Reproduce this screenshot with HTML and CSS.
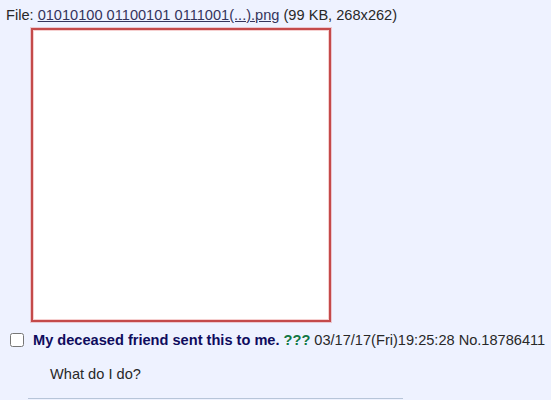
FILE: index.html
```html
<!DOCTYPE html>
<html lang="en">
<head>
  <meta charset="UTF-8" />
  <title>/x/ - Paranormal</title>
  <link rel="stylesheet" href="styles.css">
</head>
<body>
  <div class="post op">
    <div class="file-text">
      File: <a href="#">01010100 01100101 0111001(...).png</a> (99 KB, 268x262)
    </div>
    <a class="file-thumb" href="#"><div class="thumb-img"></div></a>

    <div class="post-info">
      <input type="checkbox" class="post-check" />
      <span class="subject">My deceased friend sent this to me.</span>
      <span class="name">???</span>
      <span class="date">03/17/17(Fri)19:25:28</span>
      <span class="post-num">No.18786411</span>
    </div>

    <blockquote class="post-message">What do I do?</blockquote>
  </div>
  <hr class="divider" />
</body>
</html>
```

FILE: styles.css
```css
* {
  margin: 0;
  padding: 0;
  box-sizing: border-box;
}

body {
  background: #eef2ff;
  color: #282828;
  font-family: "Liberation Sans", Arial, sans-serif;
  font-size: 14.6px;
  overflow: hidden;
}

.file-text {
  padding: 6px 0 0 6px;
  line-height: 18px;
}

.file-text a {
  color: #34345c;
  text-decoration: underline;
}

.file-thumb {
  display: block;
  margin: 4px 0 0 31px;
  width: 300px;
  height: 294px;
}

.thumb-img {
  width: 100%;
  height: 100%;
  background: #fff;
  border: 2px solid #c44a4a;
  box-shadow: 0 0 0 1px rgba(230, 120, 120, 0.35), inset 0 0 0 1px rgba(230, 120, 120, 0.35);
}

.post-info {
  display: flex;
  align-items: center;
  gap: 4px;
  margin-top: 10px;
  padding-left: 10px;
  white-space: nowrap;
}

.post-check {
  width: 14px;
  height: 14px;
  margin-right: 5px;
}

.subject {
  color: #0f0c5d;
  font-weight: bold;
}

.name {
  color: #117743;
  font-weight: bold;
}

.post-message {
  margin: 17px 0 0 50px;
  line-height: 18px;
}

.divider {
  border: none;
  border-top: 1px solid #b7c5d9;
  margin: 15px 0 0 28px;
  width: 375px;
}
```
